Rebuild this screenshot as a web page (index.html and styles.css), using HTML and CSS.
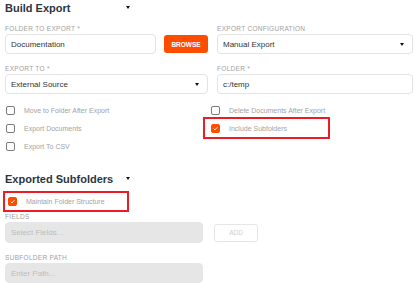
FILE: index.html
```html
<!DOCTYPE html>
<html lang="en">
<head>
  <meta charset="UTF-8">
  <meta name="viewport" content="width=device-width, initial-scale=1">
  <title>Build Export</title>
  <link rel="stylesheet" href="styles.css">
</head>
<body>
  <div class="page">
    <div class="section-head">
      <h2>Build Export</h2>
      <span class="caret"></span>
    </div>

    <div class="grid">
      <div class="field">
        <label class="label">Folder to Export *</label>
        <div class="inline">
          <div class="input">Documentation</div>
          <button class="browse">BROWSE</button>
        </div>
      </div>
      <div class="field">
        <label class="label">Export Configuration</label>
        <div class="input select">Manual Export <span class="caret"></span></div>
      </div>

      <div class="field">
        <label class="label">Export To *</label>
        <div class="input select">External Source <span class="caret"></span></div>
      </div>
      <div class="field">
        <label class="label">Folder *</label>
        <div class="input">c:/temp</div>
      </div>

      <div class="checks">
        <div class="check"><span class="box"></span>Move to Folder After Export</div>
        <div class="check"><span class="box"></span>Export Documents</div>
        <div class="check"><span class="box"></span>Export To CSV</div>
      </div>
      <div class="checks shifted">
        <div class="check"><span class="box"></span>Delete Documents After Export</div>
        <div class="check highlight wide">
          <span class="box checked">
            <svg viewBox="0 0 10 10"><path d="M2.3 5.2l1.9 1.8 3.6-3.9" fill="none" stroke="#fff" stroke-width="1.4"/></svg>
          </span>Include Subfolders
        </div>
      </div>
    </div>

    <div class="section-head second">
      <h2>Exported Subfolders</h2>
      <span class="caret"></span>
    </div>

    <div class="check highlight narrow">
      <span class="box checked">
        <svg viewBox="0 0 10 10"><path d="M2.3 5.2l1.9 1.8 3.6-3.9" fill="none" stroke="#fff" stroke-width="1.4"/></svg>
      </span>Maintain Folder Structure
    </div>

    <div class="field small">
      <label class="label">Fields</label>
      <div class="inline">
        <div class="input disabled tall">Select Fields...</div>
        <button class="add">ADD</button>
      </div>
    </div>

    <div class="field small path">
      <label class="label">Subfolder Path</label>
      <div class="input disabled">Enter Path...</div>
    </div>
  </div>
</body>
</html>
```

FILE: styles.css
```css
body {
  margin: 0;
  font-family: "Liberation Sans", Arial, sans-serif;
  background: #fff;
  color: #333;
}

.page {
  padding: 0 4px 0 5px;
}

.section-head {
  display: flex;
  align-items: center;
  justify-content: space-between;
  width: 125px;
  height: 15px;
}

.section-head h2 {
  margin: 0;
  font-size: 11px;
  font-weight: bold;
  color: #2c3542;
}

.section-head.second {
  margin-top: 16px;
}

.caret {
  width: 0;
  height: 0;
  border-left: 2.5px solid transparent;
  border-right: 2.5px solid transparent;
  border-top: 3px solid #111;
}

.grid {
  display: grid;
  grid-template-columns: 203px 196px;
  column-gap: 9px;
  row-gap: 11px;
  margin-top: 10px;
}

.field {
  display: flex;
  flex-direction: column;
  gap: 1px;
}

.label {
  font-size: 6.5px;
  line-height: 8px;
  letter-spacing: 0.3px;
  text-transform: uppercase;
  color: #a0a0a0;
}

.inline {
  display: flex;
  align-items: center;
  gap: 8px;
}

.input {
  flex: none;
  height: 20px;
  box-sizing: border-box;
  border: 1px solid #e3e3e3;
  border-radius: 4px;
  padding: 0 5px;
  display: flex;
  align-items: center;
  font-size: 8px;
  color: #333;
}

.inline .input {
  flex: 1;
}

.select {
  justify-content: space-between;
  padding-right: 8px;
}

.browse {
  width: 44px;
  height: 18px;
  border: none;
  border-radius: 3px;
  background: #ff4d00;
  color: #fff;
  font-family: inherit;
  font-size: 6.5px;
  font-weight: bold;
  padding: 0;
}

.checks {
  display: flex;
  flex-direction: column;
  margin-top: -4px;
}

.checks.shifted {
  margin-left: -7px;
}

.check {
  display: flex;
  align-items: center;
  height: 18px;
  font-size: 7px;
  color: #a3a3a3;
}

.box {
  width: 9px;
  height: 9px;
  box-sizing: border-box;
  border: 1.5px solid #7a7a7a;
  border-radius: 2px;
  margin: 0 9px 0 1px;
  display: flex;
}

.box.checked {
  background: #ff4d00;
  border-color: #ff4d00;
}

.box svg {
  width: 100%;
  height: 100%;
}

.highlight {
  border: 2px solid #ec1c24;
}

.highlight.wide {
  width: 127px;
  box-sizing: border-box;
  height: 22px;
  margin: -2px 0 0 -7px;
  padding-left: 5px;
}

.highlight.narrow {
  width: 126px;
  box-sizing: border-box;
  height: 21px;
  margin: 5px 0 0 -2px;
  padding-left: 2px;
}

.field.small {
  width: 253px;
  margin-top: 1px;
}

.inline .input.disabled,
.input.disabled {
  flex: none;
  width: 198px;
  background: #e6e6e6;
  border-color: #e6e6e6;
  color: #bdbdbd;
}

.input.tall {
  height: 21px;
}

.add {
  width: 44px;
  height: 18px;
  background: #fff;
  border: 1px solid #e6e6e6;
  border-radius: 3px;
  color: #cfcfcf;
  font-family: inherit;
  font-size: 6.5px;
  padding: 0;
  margin-left: 3px;
}

.field.path {
  margin-top: 11px;
}
```
